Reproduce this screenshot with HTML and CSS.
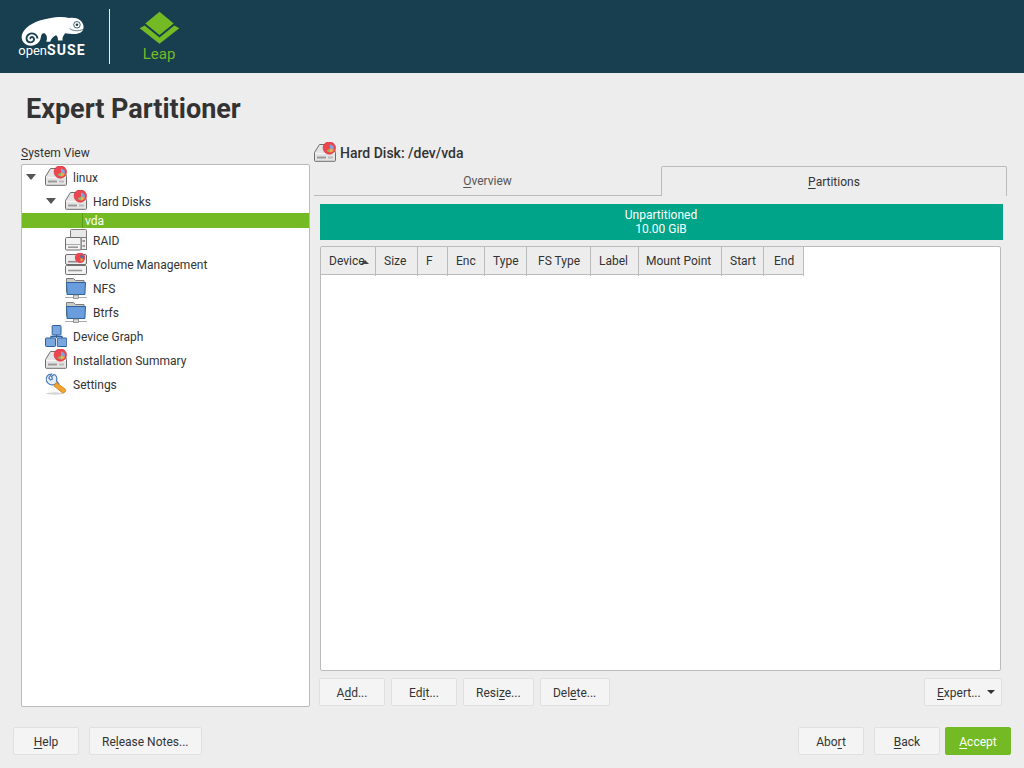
FILE: index.html
```html
<!DOCTYPE html>
<html lang="en">
<head>
    <meta charset="UTF-8">
    <meta name="viewport" content="width=device-width, initial-scale=1.0">
    <title>Expert Partitioner</title>
    <link rel="stylesheet" href="styles.css">
</head>
<body>
    <svg class="icon-defs" xmlns="http://www.w3.org/2000/svg">
        <defs>
            <symbol id="disk" viewBox="0 0 22 22">
                <path d="M5.500 2.500h13l3 8v8a.8.8 0 0 1-.8.8H1.300a.8.8 0 0 1-.8-.8v-8z" fill="#e4e4e4" stroke="#6e6e6e"/>
                <path d="M1 11.500h20" stroke="#f6f6f6"/>
                <path d="M3 15.500h9" stroke="#9a9a9a" stroke-width="2"/>
                <path d="M14 15.500h5" stroke="#bcbcbc" stroke-width="2"/>
                <circle cx="15.300" cy="6" r="6.200" fill="#ee4650" stroke="#d82a36" stroke-width=".6"/>
                <path d="M16 6.500V2.500a4 4 0 0 1 3.800 5.200z" fill="#7fa5dc"/>
                <path d="M16 6.500l3.800 1.200a4 4 0 0 1-3.800 2.800z" fill="#eab04a"/>
                <path d="M16 6.500v4a4 4 0 0 1-3.400-1.900z" fill="#93b168"/>
            </symbol>
            <symbol id="raid" viewBox="0 0 22 22">
                <rect x="5.500" y=".5" width="16" height="10" rx="1" fill="#e8e8e8" stroke="#7c7c7c"/>
                <rect x="16" y="8.500" width="5.500" height="12" fill="#ededed" stroke="#7c7c7c"/>
                <path d="M17.500 12h2.500M17.500 17h2.500" stroke="#999" stroke-width="2"/>
                <rect x=".5" y="8.500" width="15.500" height="12.500" rx="1" fill="#f3f3f3" stroke="#6e6e6e"/>
                <path d="M1 15.500h14.500" stroke="#aaa"/>
                <path d="M3 18.200h10" stroke="#999" stroke-width="1.600"/>
            </symbol>
            <symbol id="volume" viewBox="0 0 22 22">
                <rect x=".5" y="1.500" width="21" height="10" rx="1.500" fill="#ececec" stroke="#6e6e6e"/>
                <path d="M3 8.700h9" stroke="#8d8d8d" stroke-width="1.600"/>
                <rect x=".5" y="12.500" width="21" height="9" rx="1.200" fill="#f2f2f2" stroke="#6e6e6e"/>
                <path d="M3 17.500h14" stroke="#999" stroke-width="1.600"/>
                <circle cx="15" cy="4.800" r="5.200" fill="#ee4650"/>
                <path d="M15.500 5V1.800a3.200 3.200 0 0 1 3 4.200z" fill="#4d6fa8"/>
                <path d="M15.500 5l3 1a3.200 3.200 0 0 1-3 2.200z" fill="#e0a63c"/>
            </symbol>
            <symbol id="folder" viewBox="0 0 22 22">
                <path d="M1.500 15V1.500h7l2 2h8.500V15z" fill="#c9c9c9" stroke="#7c7c7c"/>
                <path d="M1.500 5.500h19l-.6 12H2.100z" fill="#6a9ddb" stroke="#2f5f9c"/>
                <path d="M0 20.500h22" stroke="#aaa"/>
                <rect x="8.500" y="18" width="5" height="3.500" fill="#d8d8d8" stroke="#777" stroke-width=".7"/>
            </symbol>
            <symbol id="graph" viewBox="0 0 22 22">
                <path d="M11.500 10v3M6 13v-1.500h11V13" fill="none" stroke="#2f5f9c" stroke-width="1.300"/>
                <rect x="7.200" y=".5" width="8.800" height="9.500" rx=".8" fill="#7aa8de" stroke="#2f5f9c"/>
                <rect x=".5" y="13" width="10" height="8.500" rx=".8" fill="#7aa8de" stroke="#2f5f9c"/>
                <rect x="12.300" y="13" width="9.500" height="8.500" rx=".8" fill="#7aa8de" stroke="#2f5f9c"/>
            </symbol>
            <symbol id="wrench" viewBox="0 0 22 22">
                <ellipse cx="10" cy="20.500" rx="9" ry="1.200" fill="#d4d4d4"/>
                <path d="M6.500 1C2.500 1 .5 4.500 1.500 8c1 3 4.500 4.500 8 3.500l3 2 1.500-2.500-2.500-3C12.500 4.500 11 2 9 1.500L6.500 3.500 7.500 6 5.500 7 3.800 5z" fill="#e4edf8" stroke="#4a7cb8" stroke-width="1.200"/>
                <path d="M11 9.500l8.800 6.200a2.400 2.400 0 0 1-2.700 3.900L9 13z" fill="#f2a22e" stroke="#d07a12" stroke-width=".8"/>
            </symbol>
        </defs>
    </svg>

    <header class="top-bar">
        <div class="brand">
            <svg class="chameleon" viewBox="55 40 205 95" xmlns="http://www.w3.org/2000/svg">
                <path d="M94 134C72 134 60 116 66 98 76 72 112 56 150 50 170 46 192 44 210 49 232 45 252 55 254 74 256 88 246 97 232 98 220 99 208 98 198 96 192 103 188 110 190 118L176 118C176 110 174 105 170 102 162 106 155 112 152 122L140 122C144 112 142 102 136 97 128 94 124 100 123 110 121 124 108 134 94 134Z" fill="#fff"/>
                <path d="M113 112C112 100 98 92 87 99 76 106 77 122 90 124 100 125 106 115 100 109 95 105 89 109 92 114" fill="none" stroke="#173f4f" stroke-width="5.500"/>
                <circle cx="234" cy="70" r="10" fill="none" stroke="#173f4f" stroke-width="2.500"/>
                <circle cx="234" cy="70" r="4" fill="#173f4f"/>
                <path d="M212 82C224 90 240 90 252 84" fill="none" stroke="#173f4f" stroke-width="2"/>
            </svg>
            <div class="brand-name">open<b>SUSE</b></div>
        </div>
        <div class="bar-divider"></div>
        <div class="product">
            <svg class="leap-mark" viewBox="415 33 124 100" xmlns="http://www.w3.org/2000/svg">
                <path d="M477 35l43 36-43 35-43-35z" fill="#73ba25"/>
                <path d="M417 85l15-8 45 36 45-36 15 8-60 47z" fill="#73ba25"/>
            </svg>
            <div class="product-name">Leap</div>
        </div>
    </header>

    <h1 class="page-title">Expert Partitioner</h1>

    <main class="workspace">
        <section class="side">
            <div class="side-label"><u>S</u>ystem View</div>
            <div class="tree">
                <div class="tree-row lvl0"><i class="arrow"></i><svg class="ico"><use href="#disk"/></svg><span>linux</span></div>
                <div class="tree-row lvl1"><i class="arrow"></i><svg class="ico"><use href="#disk"/></svg><span>Hard Disks</span></div>
                <div class="tree-row tree-selected"><span>vda</span></div>
                <div class="tree-row lvl1"><i class="arrow-none"></i><svg class="ico"><use href="#raid"/></svg><span>RAID</span></div>
                <div class="tree-row lvl1"><i class="arrow-none"></i><svg class="ico"><use href="#volume"/></svg><span>Volume Management</span></div>
                <div class="tree-row lvl1"><i class="arrow-none"></i><svg class="ico"><use href="#folder"/></svg><span>NFS</span></div>
                <div class="tree-row lvl1"><i class="arrow-none"></i><svg class="ico"><use href="#folder"/></svg><span>Btrfs</span></div>
                <div class="tree-row lvl0"><i class="arrow-none"></i><svg class="ico"><use href="#graph"/></svg><span>Device Graph</span></div>
                <div class="tree-row lvl0"><i class="arrow-none"></i><svg class="ico"><use href="#disk"/></svg><span>Installation Summary</span></div>
                <div class="tree-row lvl0"><i class="arrow-none"></i><svg class="ico"><use href="#wrench"/></svg><span>Settings</span></div>
            </div>
        </section>

        <section class="detail">
            <div class="detail-head"><svg class="ico"><use href="#disk"/></svg><span>Hard Disk: /dev/vda</span></div>
            <div class="tabs">
                <div class="tab"><u>O</u>verview</div>
                <div class="tab tab-active"><u>P</u>artitions</div>
            </div>
            <div class="panel">
                <div class="usage-bar">Unpartitioned<br>10.00 GiB</div>
                <div class="table-box">
                    <div class="table-head">
                        <div class="th sorted">Device</div>
                        <div class="th">Size</div>
                        <div class="th">F</div>
                        <div class="th">Enc</div>
                        <div class="th">Type</div>
                        <div class="th th-fstype">FS Type</div>
                        <div class="th">Label</div>
                        <div class="th th-mount">Mount Point</div>
                        <div class="th">Start</div>
                        <div class="th th-end">End</div>
                    </div>
                </div>
                <div class="actions">
                    <button class="btn">A<u>d</u>d...</button>
                    <button class="btn">Ed<u>i</u>t...</button>
                    <button class="btn">Resi<u>z</u>e...</button>
                    <button class="btn btn-delete">Del<u>e</u>te...</button>
                    <button class="btn btn-menu"><span><u>E</u>xpert...</span><i class="caret"></i></button>
                </div>
            </div>
        </section>
    </main>

    <footer class="bottom-bar">
        <button class="btn"><u>H</u>elp</button>
        <button class="btn btn-notes">Re<u>l</u>ease Notes...</button>
        <button class="btn btn-abort">Abo<u>r</u>t</button>
        <button class="btn"><u>B</u>ack</button>
        <button class="btn btn-primary"><u>A</u>ccept</button>
    </footer>
</body>
</html>
```

FILE: styles.css
```css
* {
    margin: 0;
    padding: 0;
    box-sizing: border-box;
}

body {
    font-family: Roboto, "Liberation Sans", sans-serif;
    font-size: 12px;
    color: #333;
    background-color: #ededed;
    height: 768px;
    overflow: hidden;
    display: flex;
    flex-direction: column;
}

u {
    text-underline-offset: 2px;
}

.icon-defs {
    width: 0;
    height: 0;
    display: block;
}

/* top bar */
.top-bar {
    height: 73px;
    flex: none;
    background-color: #173f4f;
    display: flex;
    align-items: flex-start;
}

.brand {
    width: 68px;
    margin: 15px 0 0 18px;
    display: flex;
    flex-direction: column;
    align-items: center;
}

.chameleon {
    width: 68px;
    height: 31px;
    display: block;
}

.brand-name {
    color: #fff;
    font-size: 13px;
    line-height: 11px;
    margin-top: -1px;
    white-space: nowrap;
}

.brand-name b {
    font-size: 14px;
    letter-spacing: 1.1px;
}

.bar-divider {
    width: 1px;
    height: 55px;
    margin: 9px 0 0 23px;
    background-color: #e8eef0;
}

.product {
    width: 42px;
    margin: 11px 0 0 28px;
    display: flex;
    flex-direction: column;
    align-items: center;
}

.leap-mark {
    width: 41px;
    height: 33px;
    display: block;
}

.product-name {
    color: #73ba25;
    font-size: 15px;
    line-height: 18px;
    margin-top: 1px;
}

.page-title {
    flex: none;
    height: 72px;
    padding: 18px 0 0 26px;
    font-size: 27px;
    line-height: 36px;
    font-weight: 700;
    color: #333;
}

/* main area */
.workspace {
    height: 562px;
    flex: none;
    display: flex;
    padding-left: 21px;
}

.side {
    width: 289px;
    display: flex;
    flex-direction: column;
}

.side-label {
    height: 19px;
    line-height: 16px;
}

.tree {
    flex: 1;
    background-color: #fff;
    border: 1px solid #bbb;
    border-radius: 2px;
}

.tree-row {
    height: 24px;
    display: flex;
    align-items: center;
    white-space: nowrap;
}

.tree-row span {
    padding-top: 2px;
}

.lvl0 {
    padding-left: 4px;
}

.lvl1 {
    padding-left: 24px;
}

.arrow,
.arrow-none {
    width: 19px;
    flex: none;
}

.arrow::before {
    content: "";
    display: block;
    width: 0;
    height: 0;
    border-left: 5px solid transparent;
    border-right: 5px solid transparent;
    border-top: 6px solid #555;
}

.ico {
    width: 22px;
    height: 22px;
    flex: none;
    margin-right: 6px;
}

.tree-selected {
    height: 15px;
    background-color: #73ba25;
    color: #fff;
    padding-left: 60px;
}

.tree-row.tree-selected span {
    border-left: 1px solid #5c9a1a;
    padding: 1px 0 0 2px;
    line-height: 14px;
}

.detail {
    width: 693px;
    margin-left: 4px;
    display: flex;
    flex-direction: column;
}

.detail-head {
    height: 25px;
    margin-top: -4px;
    padding-bottom: 2px;
    display: flex;
    align-items: center;
    font-size: 14px;
    font-weight: 500;
}

.detail-head span {
    line-height: 16px;
}

.detail-head .ico {
    margin-right: 4px;
}

.tabs {
    height: 30px;
    flex: none;
    display: flex;
}

.tab {
    width: 347px;
    text-align: center;
    line-height: 30px;
    border-bottom: 1px solid #bbb;
    color: #555;
}

.tab-active {
    width: 346px;
    color: #333;
    line-height: 31px;
    border: 1px solid #bbb;
    border-bottom: none;
    border-radius: 2px 2px 0 0;
}

.panel {
    flex: 1;
    padding: 8px 4px 0 6px;
    display: flex;
    flex-direction: column;
}

.usage-bar {
    height: 36px;
    flex: none;
    background-color: #00a489;
    color: #fff;
    text-align: center;
    line-height: 14px;
    padding: 4px 1px 0 0;
}

.table-box {
    flex: 1;
    margin: 6px 2px 0 0;
    background-color: #fff;
    border: 1px solid #bbb;
    border-radius: 2px;
}

.table-head {
    display: grid;
    grid-template-columns: 55px 42px 30px 37px 42px 64px 48px 83px 42px 40px;
    width: 483px;
    height: 28px;
    background-color: #ededed;
    border-bottom: 1px solid #bbb;
}

.th {
    line-height: 29px;
    padding-left: 8px;
    border-right: 1px solid #bbb;
    white-space: nowrap;
}

.th-fstype {
    padding-left: 11px;
}

.th-mount {
    padding-left: 7px;
}

.th-end {
    padding-left: 10px;
}

.sorted {
    position: relative;
}

.sorted::after {
    content: "";
    position: absolute;
    right: 6px;
    top: 13px;
    border-left: 4px solid transparent;
    border-right: 4px solid transparent;
    border-bottom: 4px solid #444;
}

.actions {
    flex: none;
    display: flex;
    gap: 6px;
    margin: 7px 1px 1px -1px;
}

/* buttons */
.btn {
    font-family: inherit;
    font-size: 12px;
    color: #333;
    height: 28px;
    min-width: 66px;
    padding: 2px 12px 0;
    background-color: #f4f4f4;
    border: 1px solid #e0e0e0;
    border-radius: 2px;
    white-space: nowrap;
}

.btn-delete {
    min-width: 70px;
}

.btn-menu {
    margin-left: auto;
    width: 78px;
    display: flex;
    align-items: center;
    justify-content: space-between;
    padding: 2px 6px 0 12px;
}

.caret {
    margin-top: -2px;
    border-left: 4px solid transparent;
    border-right: 4px solid transparent;
    border-top: 4px solid #333;
}

.bottom-bar {
    flex: none;
    display: flex;
    gap: 10px;
    padding: 20px 13px 0;
}

.btn-notes {
    margin-right: auto;
}

.btn-primary {
    margin-left: -5px;
    background-color: #73ba25;
    border-color: #73ba25;
    color: #fff;
}
```
